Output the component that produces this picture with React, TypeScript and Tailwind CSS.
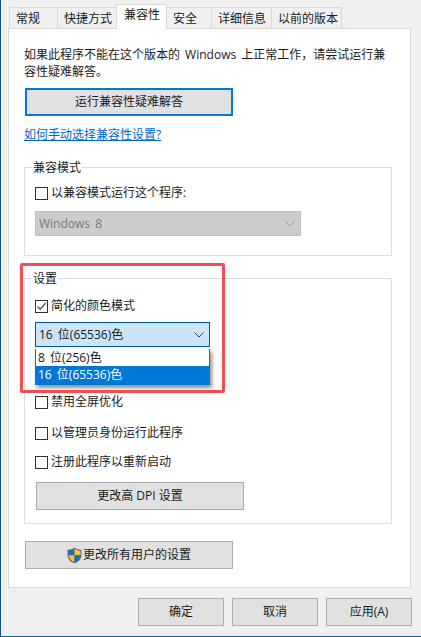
import React from 'react';

const FONT = "font-['Open_Sans','Noto_Sans_CJK_SC',sans-serif]";

const tabs = [
  { label: '常规', width: 'w-[49px]', active: false },
  { label: '快捷方式', width: 'w-[60px]', active: false },
  { label: '兼容性', width: 'w-[51px]', active: true },
  { label: '安全', width: 'w-[46px]', active: false },
  { label: '详细信息', width: 'w-[61px]', active: false },
  { label: '以前的版本', width: 'w-[71px]', active: false },
];

const Chevron = ({ color }: { color: string }) => (
  <svg width="10" height="6" viewBox="0 0 10 6" fill="none" stroke={color} strokeWidth="1">
    <path d="M0.5 0.5 L5 5 L9.5 0.5" />
  </svg>
);

const Checkbox = ({ label, checked = false, className = '' }: { label: string; checked?: boolean; className?: string }) => (
  <div className={`flex items-center h-[16px] ${className}`}>
    <div className="w-[13px] h-[13px] border border-[#333333] bg-white flex items-center justify-center shrink-0">
      {checked && (
        <svg width="11" height="11" viewBox="0 0 11 11" fill="none" stroke="#555555" strokeWidth="1.3">
          <path d="M1.5 5.5 L4.2 8.2 L9.7 2" />
        </svg>
      )}
    </div>
    <span className="ml-[3px] text-[12px] leading-[16px] text-[#1a1a1a]">{label}</span>
  </div>
);

const Shield = () => (
  <svg width="15" height="17" viewBox="0 0 15 17" className="mr-px shrink-0">
    <path d="M7.5 0.5 C5.5 2 3 2.7 0.5 2.8 V8 C0.5 12 3.5 15 7.5 16.5 C11.5 15 14.5 12 14.5 8 V2.8 C12 2.7 9.5 2 7.5 0.5 Z" fill="#6b6b6b" />
    <path d="M7.5 1.8 C5.7 3 3.6 3.6 1.6 3.8 V8.3 H7.5 Z" fill="#1270c8" />
    <path d="M7.5 1.8 C9.3 3 11.4 3.6 13.4 3.8 V8.3 H7.5 Z" fill="#f8c22e" />
    <path d="M1.6 8.3 H7.5 V15.2 C4.3 13.8 1.8 11.5 1.6 8.3 Z" fill="#f8c22e" />
    <path d="M13.4 8.3 H7.5 V15.2 C10.7 13.8 13.2 11.5 13.4 8.3 Z" fill="#1270c8" />
  </svg>
);

const Button = ({ children, className = '' }: { children: React.ReactNode; className?: string }) => (
  <button className={`h-[28px] flex items-center justify-center bg-[#e1e1e1] border border-[#adadad] text-[12px] text-[#1a1a1a] ${className}`}>
    {children}
  </button>
);

export default function App() {
  return (
    <div className={`relative w-[421px] h-[637px] overflow-hidden bg-[#f0f0f0] border-l border-b border-[#0f5a7f] [word-spacing:2px] ${FONT}`}>
      {/* tabs */}
      <div className="flex items-end h-[29px] pl-[8px] -mb-px relative z-10">
        {tabs.map((tab) =>
          tab.active ? (
            <div
              key={tab.label}
              className={`${tab.width} h-[25px] -ml-px bg-white border border-b-0 border-[#d9d9d9] pl-[7px] text-[12px] leading-[20px] text-[#1a1a1a]`}
            >
              {tab.label}
            </div>
          ) : (
            <div
              key={tab.label}
              className={`${tab.width} h-[22px] -ml-px first:ml-0 border border-[#d9d9d9] pl-[6px] text-[12px] leading-[22px] text-[#1a1a1a]`}
            >
              {tab.label}
            </div>
          )
        )}
      </div>

      {/* panel */}
      <div className="ml-[7px] w-[403px] h-[560px] bg-white border border-[#d9d9d9] pt-[17px] pl-[15px] pr-[18px]">
        <p className="text-[12px] leading-[17px] text-[#1a1a1a] w-[365px]">
          如果此程序不能在这个版本的 Windows 上正常工作，请尝试运行兼容性疑难解答。
        </p>
        <button className="mt-[8px] ml-px w-[208px] h-[28px] bg-[#e1e1e1] border-2 border-[#0078d7] text-[12px] text-[#1a1a1a]">
          运行兼容性疑难解答
        </button>
        <div className="mt-[10px] text-[12px] leading-[17px] text-[#0066cc] underline">如何手动选择兼容性设置?</div>

        {/* 兼容模式 */}
        <fieldset className="mt-[16px] w-[368px] h-[97px] border border-[#dcdcdc] pl-[10px]">
          <legend className="-ml-[3px] px-px text-[12px] leading-[17px] text-[#1a1a1a]">兼容模式</legend>
          <Checkbox label="以兼容模式运行这个程序:" className="mt-[9px]" />
          <div className="mt-[10px] w-[266px] h-[25px] bg-[#cccccc] border border-[#bfbfbf] flex items-center justify-between pl-[3px] pr-[5px] text-[12px] text-[#7a7a7a]">
            <span>Windows 8</span>
            <Chevron color="#9a9a9a" />
          </div>
        </fieldset>

        {/* 设置 */}
        <fieldset className="relative mt-[14px] w-[368px] h-[254px] border border-[#dcdcdc] pl-[10px]">
          <legend className="-ml-[3px] px-px text-[12px] leading-[17px] text-[#1a1a1a]">设置</legend>
          <Checkbox label="简化的颜色模式" checked className="mt-[11px]" />
          <div className="mt-[8px] w-[175px] h-[25px] bg-[#cce4f7] border border-[#005499] flex items-center justify-between pl-[3px] pr-[5px] text-[12px] text-[#1a1a1a]">
            <span>16 位(65536)色</span>
            <Chevron color="#444444" />
          </div>
          <Checkbox label="禁用全屏优化" className="mt-[47px]" />
          <Checkbox label="以管理员身份运行此程序" className="mt-[15px]" />
          <Checkbox label="注册此程序以重新启动" className="mt-[13px]" />
          <Button className="mt-[12px] ml-px w-[208px]">更改高 DPI 设置</Button>

          {/* open dropdown */}
          <div className="absolute left-[10px] top-[62px] w-[175px] bg-white border-x border-b border-[#0078d7] shadow-[2px_3px_4px_rgba(0,0,0,0.45)] text-[12px]">
            <div className="h-[17px] leading-[17px] pl-[2px] text-[#1a1a1a]">8 位(256)色</div>
            <div className="h-[18px] leading-[18px] pl-[2px] bg-[#0078d7] text-white">16 位(65536)色</div>
          </div>
        </fieldset>

        <Button className="mt-[17px] ml-px w-[208px]">
          <Shield />
          更改所有用户的设置
        </Button>
      </div>

      {/* footer */}
      <div className="flex mt-[10px] ml-[137px] gap-[9px]">
        <Button className="w-[86px]">确定</Button>
        <Button className="w-[86px] -ml-px">取消</Button>
        <Button className="w-[86px] -ml-px">应用(A)</Button>
      </div>

      {/* red annotation */}
      <div className="absolute z-20 left-[19px] top-[263px] w-[205px] h-[130px] border-[3px] border-[#ef4f54] rounded-[2px] pointer-events-none" />
    </div>
  );
}
